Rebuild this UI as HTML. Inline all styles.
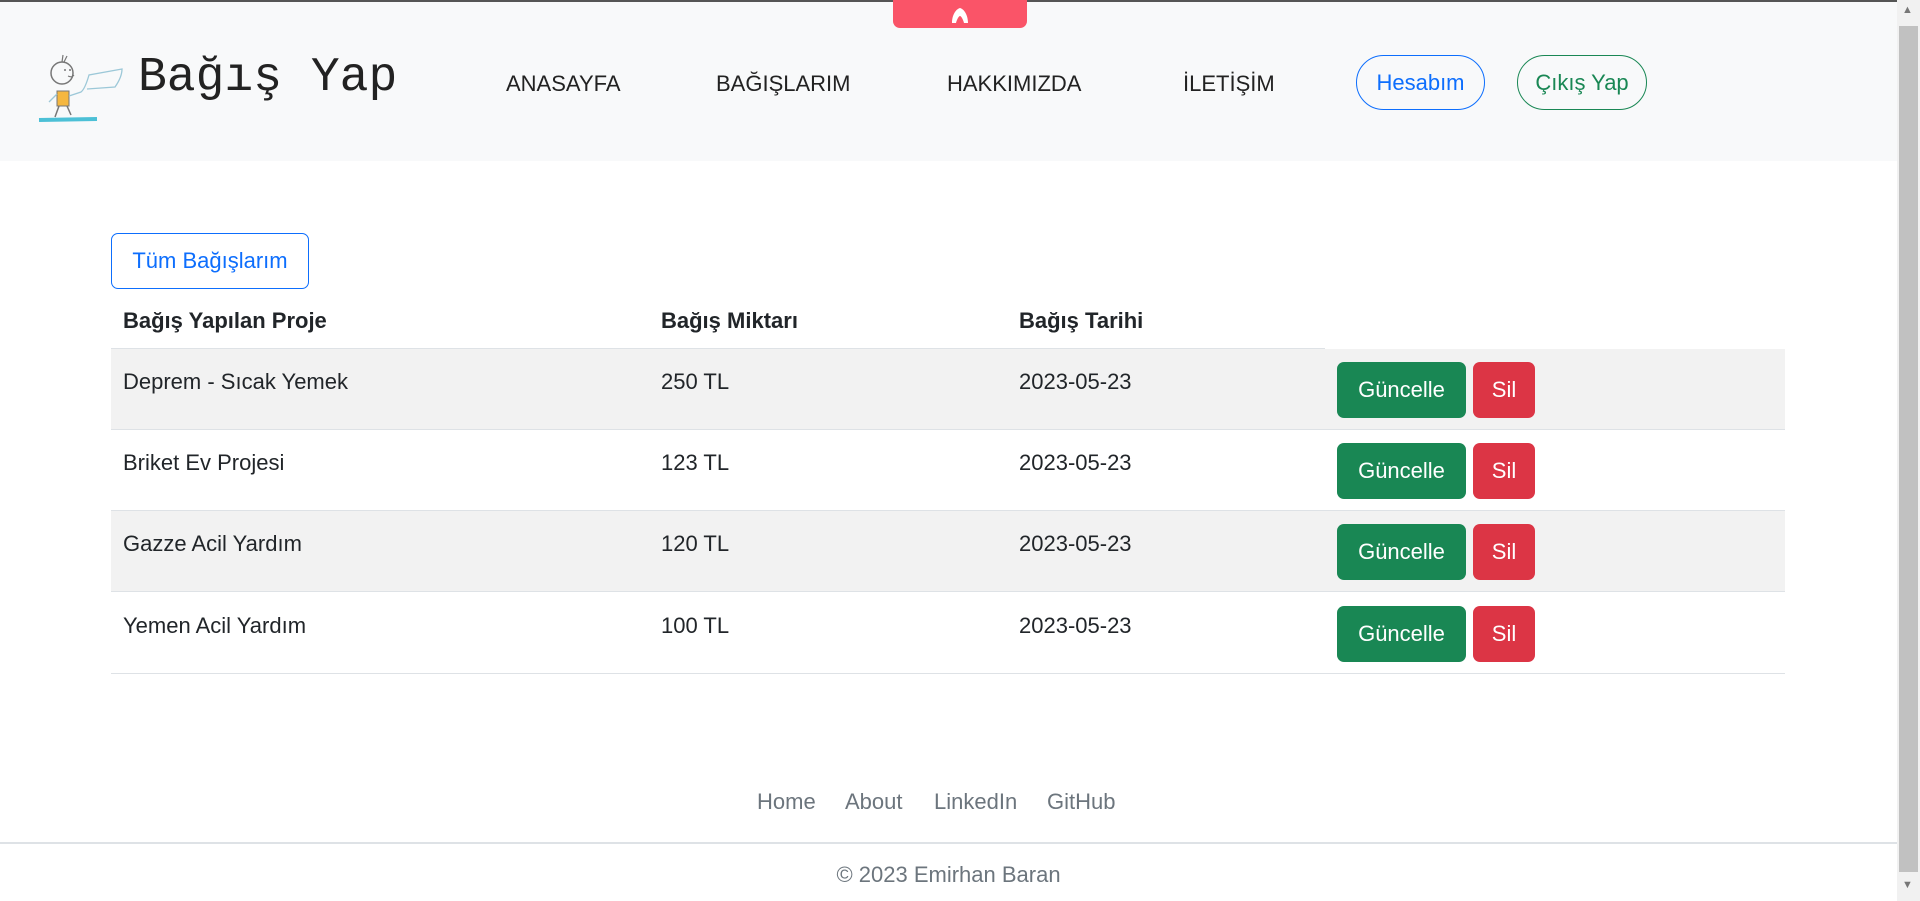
<!DOCTYPE html>
<html><head><meta charset="utf-8"><style>
*{box-sizing:border-box;margin:0;padding:0}
body{width:1920px;height:901px;overflow:hidden;background:#fff;font-family:"Segoe UI","Liberation Sans",sans-serif;color:#212529;position:relative}
.a{position:absolute}
.top{left:0;top:0;width:1920px;height:2px;background:#555}
.nav{left:0;top:2px;width:1897px;height:159px;background:#f8f9fa}
.tab{left:893px;top:0;width:134px;height:28px;background:#fa5468;border-radius:0 0 7px 7px}
.brand{left:138px;top:51px;font-family:"Liberation Mono",monospace;font-size:48px;color:#222}
.nl{top:69px;font-size:22px;color:#222;line-height:30px}
.pill{top:55px;height:55px;border-radius:28px;font-size:22px;line-height:53px;text-align:center;border:1.5px solid}
.sb{left:1897px;top:0;width:23px;height:901px;background:#f1f1f1}
.th{left:1899px;top:26px;width:19px;height:846px;background:#c1c1c1}
.btnout{left:111px;top:233px;width:198px;height:56px;border:1.5px solid #0d6efd;border-radius:7px;color:#0d6efd;font-size:22px;line-height:53px;text-align:center}
.hd{top:306px;font-size:22px;font-weight:bold;line-height:30px}
.row{left:111px;width:1674px;height:81px;border-bottom:1.5px solid #dee2e6}
.c{top:18px;font-size:22px;line-height:30px}
.g{left:1226px;top:13px;width:129px;height:56px;background:#198754;border-radius:7px;color:#fff;font-size:22px;line-height:56px;text-align:center}
.s{left:1362px;top:13px;width:62px;height:56px;background:#dc3545;border-radius:7px;color:#fff;font-size:22px;line-height:56px;text-align:center}
.fl{top:787px;font-size:22px;color:#6c757d;line-height:30px}
</style></head><body>
<div class="a top"></div>
<div class="a nav"></div>
<div class="a tab"><svg class="a" style="left:58px;top:7px" width="18" height="17" viewBox="0 0 18 17"><path d="M1 16 C1 8 5 2 9 1 C13 2 17 8 17 16 L13 16 C12 12 10 9 9 9 C8 9 6 12 5 16Z" fill="#fff"/></svg></div>
<svg class="a" style="left:37px;top:49px" width="92" height="78" viewBox="0 0 92 78">
<circle cx="25" cy="24" r="11" fill="none" stroke="#777" stroke-width="1.5"/>
<path d="M25 13 L26 6 M27 13 L30 7" stroke="#777" stroke-width="1.2"/>
<circle cx="28" cy="21" r="1" fill="#777"/><circle cx="33" cy="21" r="1" fill="#777"/>
<path d="M31 27 Q35 29 37 26" stroke="#777" fill="none"/>
<rect x="20" y="42" width="12" height="15" fill="#f5b740" stroke="#777" stroke-width="1"/>
<path d="M20 45 L12 53 M32 47 L44 43 Q48 40 52 26 L85 20 Q85 28 78 38 L50 40" stroke="#9cc8d8" stroke-width="1.3" fill="none"/>
<path d="M22 57 L18 68 M30 57 L34 66" stroke="#777" stroke-width="1.5"/>
<path d="M2 71 L60 70" stroke="#4cc0d6" stroke-width="4"/>
</svg>
<div class="a brand">Bağış Yap</div>
<div class="a nl" style="left:506px">ANASAYFA</div>
<div class="a nl" style="left:716px">BAĞIŞLARIM</div>
<div class="a nl" style="left:947px">HAKKIMIZDA</div>
<div class="a nl" style="left:1183px">İLETİŞİM</div>
<div class="a pill" style="left:1356px;width:129px;border-color:#0d6efd;color:#0d6efd">Hesabım</div>
<div class="a pill" style="left:1517px;width:130px;border-color:#198754;color:#198754">Çıkış Yap</div>
<div class="a sb"></div><div class="a th"></div>
<div class="a" style="left:1902px;top:4px;font-size:11px;color:#777">▲</div>
<div class="a" style="left:1902px;top:879px;font-size:11px;color:#777">▼</div>
<div class="a btnout">Tüm Bağışlarım</div>
<div class="a hd" style="left:123px">Bağış Yapılan Proje</div>
<div class="a hd" style="left:661px">Bağış Miktarı</div>
<div class="a hd" style="left:1019px">Bağış Tarihi</div>
<div class="a" style="left:111px;top:348px;width:1214px;height:1.5px;background:#dee2e6"></div>
<div class="a row" style="top:349px;background:#f2f2f2"><div class="a c" style="left:12px">Deprem - Sıcak Yemek</div><div class="a c" style="left:550px">250 TL</div><div class="a c" style="left:908px">2023-05-23</div><div class="a g">Güncelle</div><div class="a s">Sil</div></div>
<div class="a row" style="top:430px"><div class="a c" style="left:12px">Briket Ev Projesi</div><div class="a c" style="left:550px">123 TL</div><div class="a c" style="left:908px">2023-05-23</div><div class="a g">Güncelle</div><div class="a s">Sil</div></div>
<div class="a row" style="top:511px;background:#f2f2f2"><div class="a c" style="left:12px">Gazze Acil Yardım</div><div class="a c" style="left:550px">120 TL</div><div class="a c" style="left:908px">2023-05-23</div><div class="a g">Güncelle</div><div class="a s">Sil</div></div>
<div class="a row" style="top:593px"><div class="a c" style="left:12px">Yemen Acil Yardım</div><div class="a c" style="left:550px">100 TL</div><div class="a c" style="left:908px">2023-05-23</div><div class="a g">Güncelle</div><div class="a s">Sil</div></div>
<div class="a fl" style="left:757px">Home</div>
<div class="a fl" style="left:845px">About</div>
<div class="a fl" style="left:934px">LinkedIn</div>
<div class="a fl" style="left:1047px">GitHub</div>
<div class="a" style="left:0;top:842px;width:1897px;height:1.5px;background:#dee2e6"></div>
<div class="a fl" style="left:0;width:1897px;top:860px;text-align:center">© 2023 Emirhan Baran</div>
</body></html>
